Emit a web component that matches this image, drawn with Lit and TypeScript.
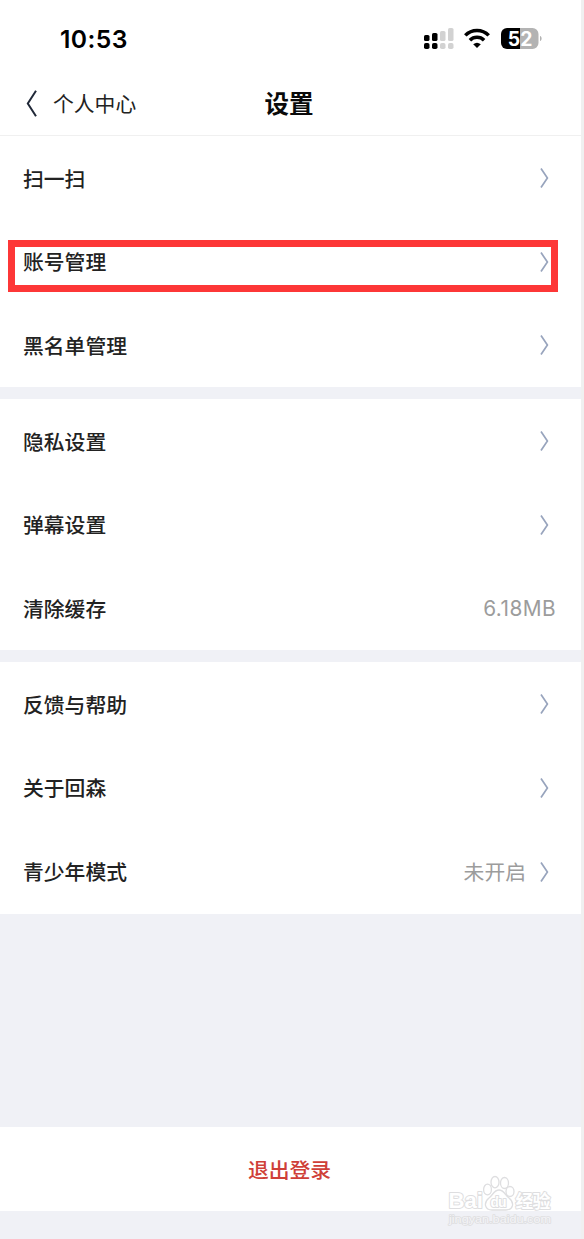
import { LitElement, html, css, nothing } from "lit";
import { customElement, property } from "lit/decorators.js";

@customElement("setting-row")
class SettingRow extends LitElement {
  @property() label = "";
  @property() value = "";
  @property({ type: Boolean }) arrow = false;
  @property({ type: Boolean, reflect: true }) marked = false;

  static styles = css`
    :host {
      display: flex;
      align-items: center;
      height: 83.8px;
      padding: 0 32px 0 23px;
      position: relative;
      font-size: 20.8px;
      line-height: 30px;
      color: #222;
    }
    :host(:not([arrow])) { padding-right: 26px; }
    .label { flex: 1; font-weight: 500; padding-bottom: 0.8px; }
    .value { color: #9c9c9c; padding-bottom: 0.8px; }
    .latin { font-family: Inter, sans-serif; font-size: 20.8px; letter-spacing: 0.45px; padding: 1px 0 0; margin-right: -1px; }
    svg { display: block; margin-left: 14px; }
    .mark {
      position: absolute;
      left: 8px;
      top: 20px;
      width: 550px;
      height: 52px;
      box-sizing: border-box;
      border: 7px solid #fd3737;
    }
  `;

  render() {
    return html`
      <span class="label">${this.label}</span>
      ${this.value
        ? html`<span class="value ${this.arrow ? "" : "latin"}">${this.value}</span>`
        : nothing}
      ${this.arrow
        ? html`<svg width="9" height="20" viewBox="0 0 9 20" fill="none" stroke="#98a4bd" stroke-width="1.7">
            <path d="M1 .6 7.4 10 1 19.4" />
          </svg>`
        : nothing}
      ${this.marked ? html`<div class="mark"></div>` : nothing}
    `;
  }
}

@customElement("status-bar")
class StatusBar extends LitElement {
  static styles = css`
    :host {
      display: flex;
      align-items: center;
      justify-content: space-between;
      height: 72px;
      padding: 6px 39px 0 60px;
      box-sizing: border-box;
    }
    .time { font: 600 24.7px/30px Inter, sans-serif; letter-spacing: 0.4px; color: #000; }
    .icons { display: block; }
    .level { font: 700 19.5px Inter, sans-serif; }
  `;

  render() {
    return html`
      <span class="time">10:53</span>
      <svg class="icons" width="118" height="24" viewBox="0 0 118 24">
        <g fill="#000">
          <rect x="0" y="8" width="5.5" height="6" rx="1.6" />
          <rect x="8" y="6" width="5.5" height="8" rx="1.6" />
          <rect x="0" y="16" width="5.5" height="6" rx="1.8" />
          <rect x="8" y="16" width="5.5" height="6" rx="1.8" />
        </g>
        <g fill="#d2d2d2">
          <rect x="16" y="4" width="5.5" height="10" rx="1.6" />
          <rect x="24" y="1" width="5.5" height="13" rx="1.6" />
          <rect x="16" y="16" width="5.5" height="6" rx="1.8" />
          <rect x="24" y="16" width="5.5" height="6" rx="1.8" />
        </g>
        <g fill="none" stroke="#000" stroke-width="3.5">
          <path d="M41.3 8.400a16.200 16.200 0 0 1 23.400 0" />
          <path d="M45.900 13.300a10 10 0 0 1 14.200 0" />
        </g>
        <path d="M49.200 17.300a6 6 0 0 1 7.600 0L53 21z" fill="#000" />
        <path d="M83 1H96V22H83a6 6 0 0 1-6-6V7a6 6 0 0 1 6-6z" fill="#000" />
        <path d="M96 1h12.500a6 6 0 0 1 6 6v9a6 6 0 0 1-6 6H96z" fill="#b3b3b3" />
        <path d="M116 9c2.200.5 2.200 4.500 0 5z" fill="#b3b3b3" />
        <text class="level" x="83.800" y="18.500" fill="#fff" textLength="24.600" lengthAdjust="spacingAndGlyphs">52</text>
      </svg>
    `;
  }
}

@customElement("page-watermark")
class PageWatermark extends LitElement {
  static styles = css`
    :host { display: block; }
    text {
      fill: #fff;
      stroke: #dedee0;
      stroke-width: 2px;
      paint-order: stroke;
      stroke-linejoin: round;
    }
    .brand { font: 700 22px "Liberation Sans", sans-serif; }
    .du { font: 700 14px "Liberation Sans", sans-serif; }
    .cjk { font: 700 18px "Noto Sans CJK SC", sans-serif; }
    .site { font: 400 11px "Liberation Sans", sans-serif; fill: #f4f4f7; stroke-width: 1.5px; }
  `;

  render() {
    return html`
      <svg width="112" height="54" viewBox="0 0 112 54">
        <g fill="#fff" stroke="#dedee0" stroke-width="1.300">
          <ellipse cx="41.500" cy="16.500" rx="3.900" ry="5.300" />
          <ellipse cx="49" cy="9.200" rx="4" ry="5.700" />
          <ellipse cx="58.500" cy="10" rx="4" ry="5.500" />
          <ellipse cx="64" cy="18.500" rx="4" ry="5" />
          <path d="M53 17c-5 0-6 5-10 8-6 5-4 12 3 12h14c7 0 9-7 3-12-4-3-5-8-10-8z" />
        </g>
        <text class="brand" x="2.500" y="35" textLength="34.500" lengthAdjust="spacingAndGlyphs">Bai</text>
        <text class="du" x="44.500" y="34" textLength="16">du</text>
        <text class="cjk" x="69.500" y="34.500" textLength="35">经验</text>
        <text class="site" x="3" y="49.500" textLength="102" lengthAdjust="spacingAndGlyphs">jingyan.baidu.com</text>
      </svg>
    `;
  }
}

@customElement("app-root")
class AppRoot extends LitElement {
  static styles = css`
    :host {
      display: block;
      width: 584px;
      height: 1239px;
      box-sizing: border-box;
      border-right: 3px solid #f0f0f0;
      position: relative;
      overflow: hidden;
      background: #f0f1f6;
      font-family: "Noto Sans CJK SC", sans-serif;
    }
    .page { display: flex; flex-direction: column; height: 100%; }
    .top { background: #fff; }
    .nav {
      display: grid;
      grid-template-columns: 1fr auto 1fr;
      align-items: center;
      height: 64px;
      box-sizing: border-box;
      border-bottom: 1px solid #f0f0f0;
      padding: 0 29px 0 26px;
    }
    .back { display: flex; align-items: center; gap: 16px; font-size: 20.8px; line-height: 30px; color: #222; }
    .back span { padding-bottom: 2px; }
    .title { margin: 0; padding-bottom: 2px; font-size: 24.5px; line-height: 36px; font-weight: 700; color: #0a0a0a; }
    .group { background: #fff; margin-bottom: 11.7px; }
    .logout {
      margin-top: 202px;
      height: 83.500px;
      border: 0;
      padding: 0 2px 0 0;
      background: #fff;
      color: #cf3f38;
      font: 500 20.8px/30px "Noto Sans CJK SC", sans-serif;
    }
    .watermark { position: absolute; left: 446px; top: 1173px; }
  `;

  render() {
    return html`
      <div class="page">
        <header class="top">
          <status-bar></status-bar>
          <div class="nav">
            <div class="back">
              <svg width="11" height="27" viewBox="0 0 11 27" fill="none" stroke="#202838" stroke-width="2">
                <path d="M10 .8 1.800 13.500 10 26.200" />
              </svg>
              <span>个人中心</span>
            </div>
            <h1 class="title">设置</h1>
          </div>
        </header>
        <section class="group">
          <setting-row label="扫一扫" arrow></setting-row>
          <setting-row label="账号管理" arrow marked></setting-row>
          <setting-row label="黑名单管理" arrow></setting-row>
        </section>
        <section class="group">
          <setting-row label="隐私设置" arrow></setting-row>
          <setting-row label="弹幕设置" arrow></setting-row>
          <setting-row label="清除缓存" value="6.18MB"></setting-row>
        </section>
        <section class="group">
          <setting-row label="反馈与帮助" arrow></setting-row>
          <setting-row label="关于回森" arrow></setting-row>
          <setting-row label="青少年模式" value="未开启" arrow></setting-row>
        </section>
        <button class="logout">退出登录</button>
      </div>
      <page-watermark class="watermark"></page-watermark>
    `;
  }
}
